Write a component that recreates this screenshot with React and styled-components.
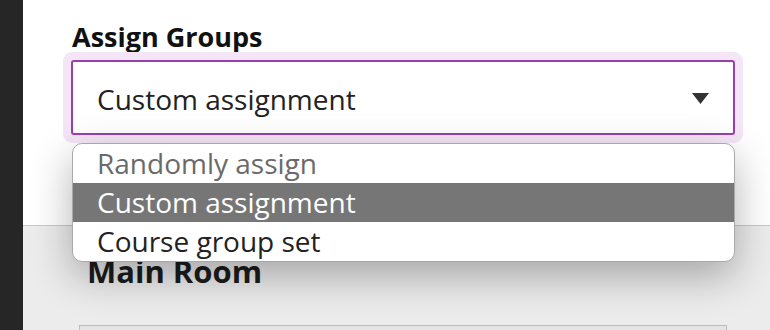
import React from "react";
import styled, { createGlobalStyle } from "styled-components";

const GlobalStyle = createGlobalStyle`
  html, body { margin: 0; padding: 0; background: #fff; }
  body { font-family: "Open Sans", "Noto Sans", Arial, sans-serif; }
  * { box-sizing: border-box; }
`;

const Page = styled.div`
  display: flex;
  width: 770px;
  height: 330px;
  overflow: hidden;
`;

const Sidebar = styled.div`
  width: 23px;
  flex-shrink: 0;
  background: #262626;
`;

const Main = styled.div`
  flex: 1;
  display: flex;
  flex-direction: column;
  background: #fff;
`;

const TopArea = styled.section`
  height: 225px;
  flex-shrink: 0;
  padding: 20px 35px 0 48px;
  background: #fff;
  position: relative;
  z-index: 2;
`;

const Heading = styled.h2`
  margin: 0 0 6px 1px;
  font-size: 27px;
  line-height: 34px;
  font-weight: 700;
  color: #111;
`;

const Field = styled.div`
  position: relative;
  width: 664px;
`;

const SelectBox = styled.div`
  height: 75px;
  display: flex;
  align-items: center;
  justify-content: space-between;
  padding: 2px 24px 0 24px;
  border: 2px solid #9c3fae;
  border-radius: 3px;
  background: #fff;
  box-shadow: 0 0 0 8px #f4e6f6;
  font-size: 28px;
  line-height: 38px;
  color: #222;
`;

const Arrow = styled.svg`
  width: 17px;
  height: 11px;
  flex-shrink: 0;
`;

const List = styled.ul`
  position: absolute;
  top: calc(100% + 8px);
  left: 1px;
  width: 663px;
  margin: 0;
  padding: 0;
  list-style: none;
  background: #fff;
  border: 1px solid #a9a9a9;
  border-radius: 10px;
  overflow: hidden;
  box-shadow: 0 14px 40px rgba(0, 0, 0, 0.3);
`;

const Option = styled.li`
  height: 39px;
  padding: 0 24px;
  font-size: 28px;
  line-height: 39px;
  white-space: nowrap;
  color: ${(p) => (p.$selected ? "#fff" : p.$muted ? "#6a6a6a" : "#222")};
  background: ${(p) => (p.$selected ? "#767676" : "transparent")};
`;

const LowerArea = styled.section`
  flex: 1;
  border-top: 1px solid #c9c9c9;
  background: #ececec;
  padding: 25px 35px 0 56px;
`;

const RoomTitle = styled.h3`
  margin: 0 0 34px 8px;
  font-size: 31px;
  line-height: 40px;
  font-weight: 700;
  color: #1c1c1c;
`;

const RoomBox = styled.div`
  width: 648px;
  height: 60px;
  border: 1px solid #bdbdbd;
  background: #e4e4e4;
`;

export default function App() {
  return (
    <>
      <GlobalStyle />
      <Page>
        <Sidebar />
        <Main>
          <TopArea>
            <Heading>Assign Groups</Heading>
            <Field>
              <SelectBox>
                <span>Custom assignment</span>
                <Arrow viewBox="0 0 17 11">
                  <polygon points="0,0 17,0 8.5,11" fill="#333" />
                </Arrow>
              </SelectBox>
              <List>
                <Option $muted>Randomly assign</Option>
                <Option $selected>Custom assignment</Option>
                <Option>Course group set</Option>
              </List>
            </Field>
          </TopArea>
          <LowerArea>
            <RoomTitle>Main Room</RoomTitle>
            <RoomBox />
          </LowerArea>
        </Main>
      </Page>
    </>
  );
}
